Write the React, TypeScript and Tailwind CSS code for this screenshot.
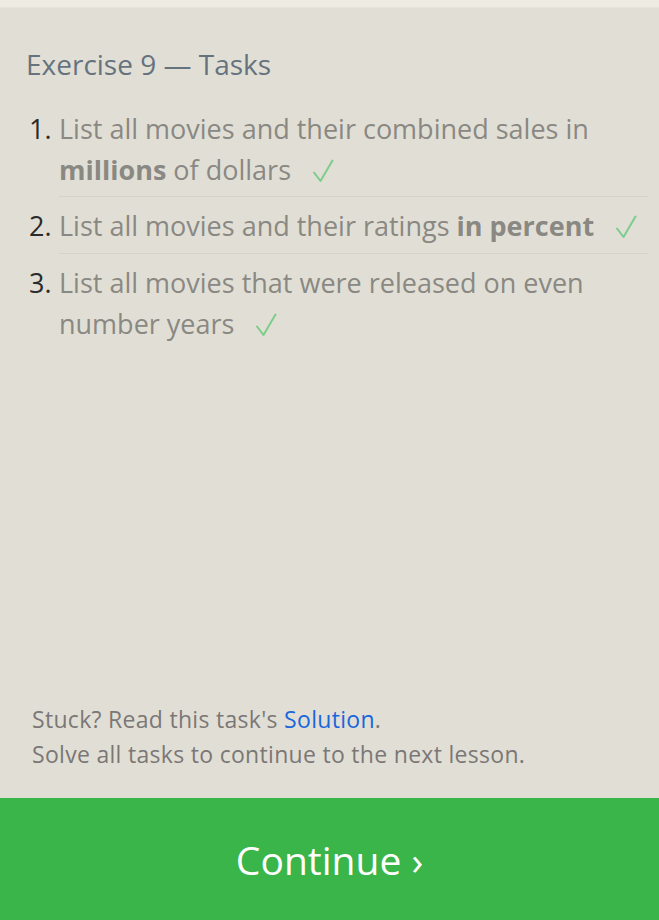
import React from "react";

const tasks: { content: React.ReactNode }[] = [
  {
    content: (
      <>
        List all movies and their combined sales in <b className="font-bold">millions</b> of dollars
      </>
    ),
  },
  {
    content: (
      <>
        List all movies and their ratings <b className="font-bold">in percent</b>
      </>
    ),
  },
  {
    content: <>List all movies that were released on even number years</>,
  },
];

function Check() {
  return (
    <svg
      width="21"
      height="24"
      viewBox="0 0 21 24"
      className="inline-block ml-[22px] align-[-3px]"
      fill="none"
      stroke="#7ccd8b"
      strokeWidth="2"
      strokeLinecap="round"
      strokeLinejoin="round"
    >
      <path d="M1 13.5 L7.5 22 L19.5 1.5" />
    </svg>
  );
}

export default function App() {
  return (
    <div
      className="w-[659px] h-[920px] flex flex-col bg-[#e1dfd5]"
      style={{ fontFamily: '"Open Sans", "Noto Sans", sans-serif' }}
    >
      <div className="h-[8px] bg-[#eeebe3] border-b border-[#e6e3da]" />
      <div className="flex-1 flex flex-col">
        <div className="px-[26px] pt-[38px]">
          <h1 className="text-[28px] leading-[36px] text-[#66737f]">Exercise 9 — Tasks</h1>
        </div>
        <ol className="mt-[26px] pl-[59px] pr-[11px]">
          {tasks.map((t, i) => (
            <li
              key={i}
              className={
                "relative text-[27px] leading-[41px] text-[#8a8883] " +
                (i === 0 ? "pb-[6px] " : "pt-[8px] pb-[7px] ") +
                (i < tasks.length - 1 ? "border-b border-[#d5d3c9]" : "")
              }
            >
              <span className="absolute left-[-30px] text-[#2b2b2b]">{i + 1}.</span>
              {t.content}
              <Check />
            </li>
          ))}
        </ol>
        <div className="flex-1" />
        <div className="px-[32px] pb-[26px] text-[23px] tracking-[0.3px] leading-[35px] text-[#7b7777]">
          <div>
            Stuck? Read this task's <span className="text-[#1a66dc]">Solution</span>.
          </div>
          <div>Solve all tasks to continue to the next lesson.</div>
        </div>
      </div>
      <div className="h-[122px] bg-[#3ab54a] flex items-center justify-center">
        <span className="text-white text-[39px] leading-none">Continue ›</span>
      </div>
    </div>
  );
}
